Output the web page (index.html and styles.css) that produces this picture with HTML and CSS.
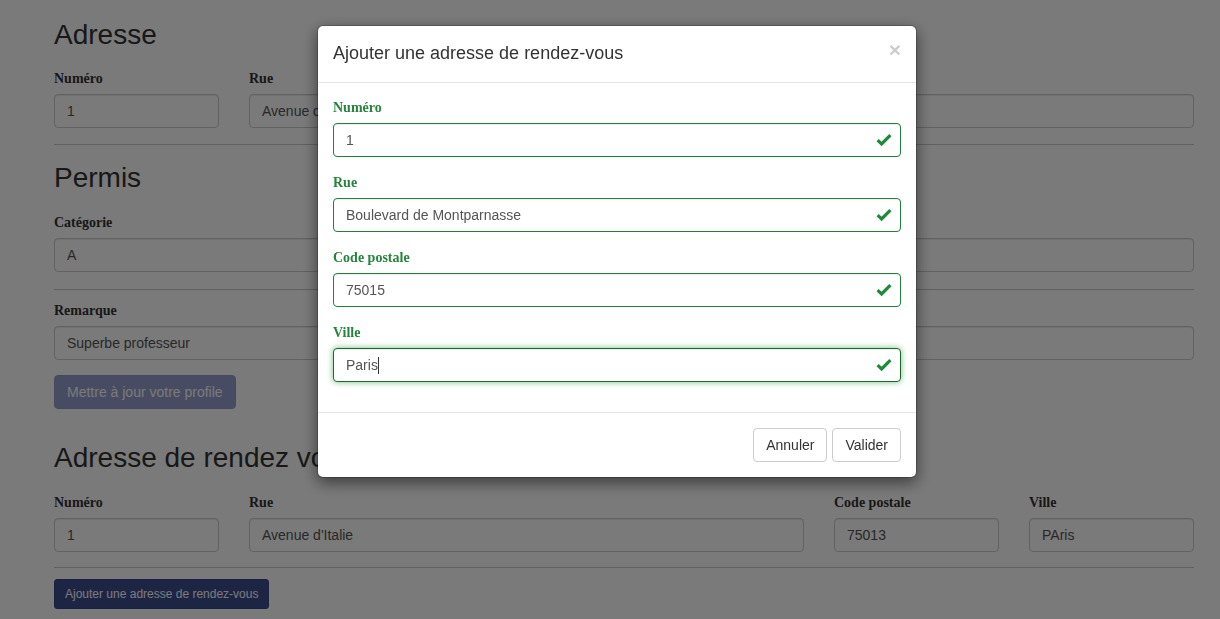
FILE: index.html
```html
<!DOCTYPE html>
<html lang="fr">
<head>
<meta charset="utf-8">
<title>Profil</title>
<link rel="stylesheet" href="styles.css">
</head>
<body>
<div class="page">
  <h2 class="section-title first">Adresse</h2>
  <div class="row">
    <div class="form-group span-2"><label>Numéro</label><input class="form-control" value="1"></div>
    <div class="form-group span-4"><label>Rue</label><input class="form-control" value="Avenue d'Italie"></div>
    <div class="form-group span-6"><label>Ville</label><input class="form-control" value=""></div>
  </div>
  <hr class="divider">

  <h2 class="section-title">Permis</h2>
  <div class="row">
    <div class="form-group span-12 loose"><label>Catégorie</label><input class="form-control" value="A"></div>
  </div>
  <hr class="divider">
  <div class="row after-divider">
    <div class="form-group span-12 tight"><label>Remarque</label><input class="form-control" value="Superbe professeur"></div>
  </div>
  <button class="btn btn-primary btn-update" disabled>Mettre à jour votre profile</button>

  <h2 class="section-title spaced">Adresse de rendez vous</h2>
  <div class="row">
    <div class="form-group span-2 tight"><label>Numéro</label><input class="form-control" value="1"></div>
    <div class="form-group span-6 tight"><label>Rue</label><input class="form-control" value="Avenue d'Italie"></div>
    <div class="form-group span-2 tight"><label>Code postale</label><input class="form-control" value="75013"></div>
    <div class="form-group span-2 tight"><label>Ville</label><input class="form-control" value="PAris"></div>
  </div>
  <hr class="divider">
  <button class="btn btn-primary btn-sm add-btn">Ajouter une adresse de rendez-vous</button>
</div>

<div class="backdrop"></div>

<div class="modal">
  <div class="modal-header">
    <h4 class="modal-title">Ajouter une adresse de rendez-vous</h4>
    <button class="close" type="button">×</button>
  </div>
  <div class="modal-body">
    <div class="form-group has-success">
      <label>Numéro</label>
      <div class="control-wrap">
        <input class="form-control" value="1">
        <svg class="feedback" viewBox="0 0 16 14" width="16" height="14"><path d="M1.6 7.2 L5.6 11 L14.4 2.2" fill="none" stroke="currentColor" stroke-width="3.2"/></svg>
      </div>
    </div>
    <div class="form-group has-success">
      <label>Rue</label>
      <div class="control-wrap">
        <input class="form-control" value="Boulevard de Montparnasse">
        <svg class="feedback" viewBox="0 0 16 14" width="16" height="14"><path d="M1.6 7.2 L5.6 11 L14.4 2.2" fill="none" stroke="currentColor" stroke-width="3.2"/></svg>
      </div>
    </div>
    <div class="form-group has-success">
      <label>Code postale</label>
      <div class="control-wrap">
        <input class="form-control" value="75015">
        <svg class="feedback" viewBox="0 0 16 14" width="16" height="14"><path d="M1.6 7.2 L5.6 11 L14.4 2.2" fill="none" stroke="currentColor" stroke-width="3.2"/></svg>
      </div>
    </div>
    <div class="form-group has-success">
      <label>Ville</label>
      <div class="control-wrap">
        <input class="form-control focused" value="Paris">
        <span class="caret-line"></span>
        <svg class="feedback" viewBox="0 0 16 14" width="16" height="14"><path d="M1.6 7.2 L5.6 11 L14.4 2.2" fill="none" stroke="currentColor" stroke-width="3.2"/></svg>
      </div>
    </div>
  </div>
  <div class="modal-footer">
    <button class="btn btn-default" type="button">Annuler</button>
    <button class="btn btn-default" type="button">Valider</button>
  </div>
</div>
</body>
</html>
```
FILE: styles.css
```css
* { box-sizing: border-box; }

html, body {
  margin: 0;
  padding: 0;
  background: #fff;
}

body {
  font-family: "Liberation Sans", Arial, sans-serif;
  font-size: 14px;
  line-height: 20px;
  color: #333;
  overflow: hidden;
  height: 619px;
}

.page {
  width: 1140px;
  margin-left: 54px;
}

.section-title {
  font-family: "Liberation Sans", Arial, sans-serif;
  font-size: 28px;
  line-height: 30px;
  font-weight: 400;
  color: #333;
  margin: 18px 0 20px;
}

.section-title.first { margin-top: 20px; margin-bottom: 19px; }
.section-title.spaced { margin-top: 34px; }

.row {
  display: grid;
  grid-template-columns: repeat(12, 1fr);
  column-gap: 30px;
}

.span-2 { grid-column: span 2; }
.span-4 { grid-column: span 4; }
.span-6 { grid-column: span 6; }
.span-12 { grid-column: span 12; }

.after-divider { margin-top: 11px; }

.form-group { margin-bottom: 16px; }
.form-group.loose { margin-bottom: 17px; }
.form-group.tight { margin-bottom: 15px; }

label {
  display: block;
  font-family: "Liberation Serif", "Times New Roman", serif;
  font-weight: 700;
  font-size: 14px;
  line-height: 20px;
  margin-bottom: 5px;
  color: #333;
}

.form-control {
  display: block;
  width: 100%;
  height: 34px;
  padding: 6px 12px;
  font-family: "Liberation Sans", Arial, sans-serif;
  font-size: 14px;
  line-height: 20px;
  color: #555;
  background: #fff;
  border: 1px solid #ccc;
  border-radius: 4px;
  box-shadow: inset 0 1px 1px rgba(0,0,0,.075);
  outline: none;
  margin: 0;
}

.divider {
  border: 0;
  border-top: 1px solid #c8c8c8;
  margin: 0;
  height: 0;
}

.btn {
  display: inline-block;
  font-family: "Liberation Sans", Arial, sans-serif;
  font-size: 14px;
  line-height: 20px;
  padding: 6px 12px;
  border: 1px solid transparent;
  border-radius: 4px;
  cursor: pointer;
  margin: 0;
}

.btn-primary {
  background: #3e4e90;
  border-color: #364584;
  color: #fff;
}

.btn-update {
  background: #5e6db2;
  border-color: #5665a8;
}

.btn-primary:disabled { opacity: .65; }

.btn-sm {
  font-size: 12px;
  line-height: 18px;
  padding: 5px 10px;
  border-radius: 3px;
}

.add-btn { margin-top: 11px; }

.btn-default {
  background: #fff;
  border-color: #ccc;
  color: #333;
}

.backdrop {
  position: fixed;
  inset: 0;
  background: #000;
  opacity: .52;
}

.modal {
  position: fixed;
  top: 25px;
  left: 317px;
  width: 600px;
  background: #fff;
  border: 1px solid rgba(0,0,0,.2);
  border-radius: 6px;
  box-shadow: 0 5px 15px rgba(0,0,0,.5);
  background-clip: padding-box;
}

.modal-header {
  display: flex;
  justify-content: space-between;
  align-items: flex-start;
  padding: 15px;
  border-bottom: 1px solid #e5e5e5;
}

.modal-title {
  margin: 0;
  font-family: "Liberation Sans", Arial, sans-serif;
  font-size: 18px;
  font-weight: 400;
  line-height: 25.7px;
  color: #333;
}

.close {
  margin-top: -2px;
  padding: 0;
  border: 0;
  background: transparent;
  font-family: "Liberation Sans", Arial, sans-serif;
  font-size: 21px;
  font-weight: 700;
  line-height: 1;
  color: #000;
  opacity: .2;
  text-shadow: 0 1px 0 #fff;
  cursor: pointer;
}

.modal-body { padding: 15px; }

.modal-body .form-group { margin-bottom: 16px; }
.modal-body .form-group:last-child { margin-bottom: 15px; }

.has-success label { color: #25843c; }

.control-wrap { position: relative; }

.has-success .form-control {
  border-color: #23803a;
  padding-right: 42px;
}

.has-success .form-control.focused {
  border-color: #1d6a30;
  box-shadow: inset 0 1px 1px rgba(0,0,0,.075), 0 0 6px #73bd7f;
}

.feedback {
  position: absolute;
  right: 9px;
  top: 10px;
  color: #1f8a3c;
}

.caret-line {
  position: absolute;
  left: 45px;
  top: 9px;
  width: 1px;
  height: 17px;
  background: #333;
}

.modal-footer {
  padding: 15px;
  border-top: 1px solid #e5e5e5;
  display: flex;
  justify-content: flex-end;
  gap: 5px;
}
```
